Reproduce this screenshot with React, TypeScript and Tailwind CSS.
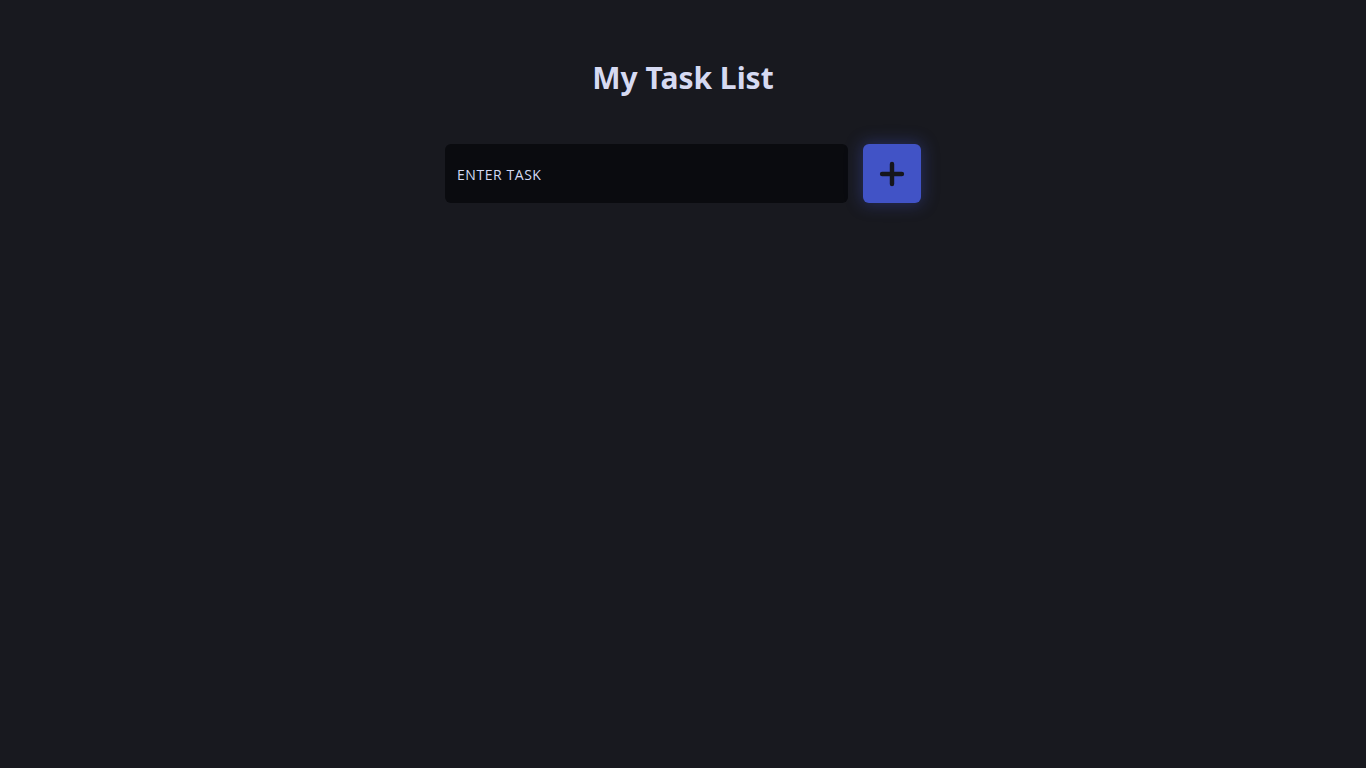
import { useState } from 'react';

export default function App() {
  const [task, setTask] = useState('');

  return (
    <div className="min-h-screen w-full bg-[#18191f] font-['Open_Sans',sans-serif]">
      <div className="flex flex-col items-center pt-[57px]">
        <h1 className="text-[30px] font-bold leading-[42px] text-[#d6daf2] font-['Noto_Sans',sans-serif]">
          My Task List
        </h1>

        <div className="mt-[45px] flex items-center gap-[15px]">
          <input
            value={task}
            onChange={(e) => setTask(e.target.value)}
            placeholder="ENTER TASK"
            className="h-[59px] w-[403px] rounded-md bg-[#0a0b0f] px-3 pt-[2px] text-sm tracking-[0.04em] text-[#d6daf2] outline-none placeholder:text-[#d3d9f4]"
          />
          <button className="flex h-[59px] w-[58px] items-center justify-center rounded-md bg-[#4153c6] shadow-[0_0_16px_2px_rgba(65,83,198,0.35)]">
            <svg viewBox="0 0 24 24" className="h-[28px] w-[28px]" fill="none" stroke="#15161c" strokeWidth={3.8} strokeLinecap="round">
              <path d="M12 3.5v17M3.5 12h17" />
            </svg>
          </button>
        </div>
      </div>
    </div>
  );
}
